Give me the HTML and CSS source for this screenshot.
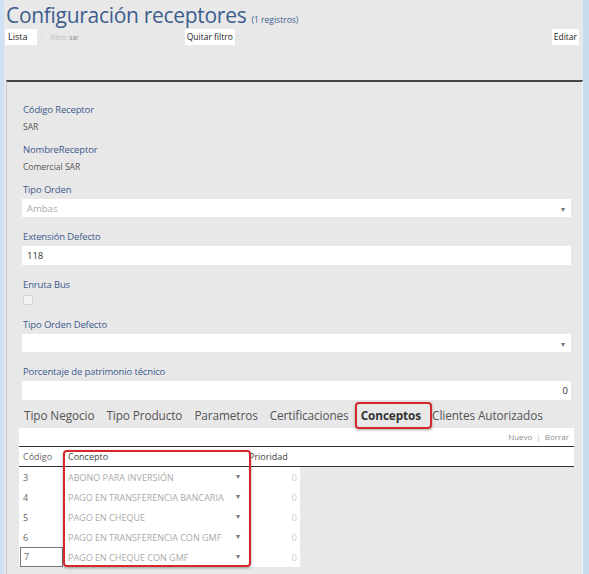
FILE: index.html
```html
<!DOCTYPE html>
<html lang="es">
<head>
<meta charset="utf-8">
<title>Configuración receptores</title>
<link rel="stylesheet" href="styles.css">
</head>
<body>
<div class="page">
  <div class="header">
    <h1 class="title">Configuración receptores <span class="count">(1 registros)</span></h1>
  </div>
  <div class="toolbar">
    <span class="btn btn-lista">Lista</span>
    <span class="sep">|</span>
    <span class="filter"><span class="filter-key">Filtro:</span> sar</span>
    <span class="btn btn-quitar">Quitar filtro</span>
    <span class="spacer"></span>
    <span class="btn btn-editar">Editar</span>
  </div>

  <div class="panel">
    <div class="field field-display">
      <div class="label">Código Receptor</div>
      <div class="value">SAR</div>
    </div>
    <div class="field field-display">
      <div class="label">NombreReceptor</div>
      <div class="value">Comercial SAR</div>
    </div>
    <div class="field field-input">
      <div class="label">Tipo Orden</div>
      <div class="input select"><span class="placeholder">Ambas</span><span class="caret">▾</span></div>
    </div>
    <div class="field field-input">
      <div class="label">Extensión Defecto</div>
      <div class="input text-input">118</div>
    </div>
    <div class="field field-input">
      <div class="label">Enruta Bus</div>
      <div class="checkbox"></div>
    </div>
    <div class="field field-input">
      <div class="label">Tipo Orden Defecto</div>
      <div class="input select"><span class="placeholder"></span><span class="caret">▾</span></div>
    </div>
    <div class="field field-last">
      <div class="label">Porcentaje de patrimonio técnico</div>
      <div class="input text-input num">0</div>
    </div>

    <div class="tabs-section">
      <div class="tabs">
        <span class="tab">Tipo Negocio</span>
        <span class="tab">Tipo Producto</span>
        <span class="tab">Parametros</span>
        <span class="tab">Certificaciones</span>
        <span class="tab tab-active">Conceptos</span>
        <span class="tab tab-after">Clientes Autorizados</span>
      </div>
      <div class="grid-wrap">
        <div class="grid-actions"><span>Nuevo</span><span class="bar">|</span><span>Borrar</span></div>
        <div class="grid-head">
          <span class="col-code">Código</span>
          <span class="col-concept">Concepto</span>
          <span class="col-prio">Prioridad</span>
        </div>
        <div class="grid-body">
          <div class="row"><span class="col-code">3</span><span class="col-concept"><span>ABONO PARA INVERSIÓN</span><span class="caret">▾</span></span><span class="col-prio">0</span></div>
          <div class="row"><span class="col-code">4</span><span class="col-concept"><span>PAGO EN TRANSFERENCIA BANCARIA</span><span class="caret">▾</span></span><span class="col-prio">0</span></div>
          <div class="row"><span class="col-code">5</span><span class="col-concept"><span>PAGO EN CHEQUE</span><span class="caret">▾</span></span><span class="col-prio">0</span></div>
          <div class="row"><span class="col-code">6</span><span class="col-concept"><span>PAGO EN TRANSFERENCIA CON GMF</span><span class="caret">▾</span></span><span class="col-prio">0</span></div>
          <div class="row"><span class="col-code col-selected">7</span><span class="col-concept"><span>PAGO EN CHEQUE CON GMF</span><span class="caret">▾</span></span><span class="col-prio">0</span></div>
          <div class="highlight-concept"></div>
        </div>
      </div>
    </div>
  </div>
</div>
</body>
</html>
```

FILE: styles.css
```css
* { box-sizing: border-box; }
html, body { margin: 0; padding: 0; }
body {
  font-family: "Open Sans", "Noto Sans", sans-serif;
  background: #e8e8e8;
  color: #333;
}
.page {
  width: 589px;
  height: 574px;
  overflow: hidden;
  background: #e8e8e8;
  border-left: 4px solid #cfe2f3;
  border-right: 6px solid #c5dbee;
}
.header { padding-left: 2px; height: 29px; }
.title {
  margin: 0;
  font-weight: normal;
  font-size: 21px;
  line-height: 30px;
  color: #3d5d8e;
  letter-spacing: -0.3px;
}
.count { font-size: 8.5px; letter-spacing: 0; }

.toolbar {
  display: flex;
  align-items: center;
  height: 16px;
  font-size: 9px;
}
.btn {
  background: #fff;
  color: #222;
  height: 16px;
  line-height: 16px;
  padding: 0 3px;
  white-space: nowrap;
}
.btn-lista { margin-left: 1px; width: 32px; }
.sep { color: #d0d0d0; margin-left: 3px; font-size: 8px; }
.filter { color: #8a8a8a; font-size: 6.5px; margin-left: 6px; }
.filter-key { color: #b8b8b8; }
.btn-quitar { margin-left: 106px; font-size: 8.5px; padding: 0 2px; }
.spacer { flex: 1; }
.btn-editar { margin-right: 4px; font-size: 8.5px; padding: 0 2px; }

.panel {
  margin: 35px 0 0 2px;
  border-top: 2px solid #474747;
  border-left: 1px solid #c8c8c8;
  border-right: 1px solid #f4f4f4;
  padding: 21px 11px 0 15px;
  height: 500px;
}
.label {
  font-size: 9.5px;
  letter-spacing: -0.15px;
  line-height: 14px;
  color: #3d5a8c;
  padding-left: 1px;
  white-space: nowrap;
}
.value {
  margin-top: 3px;
  font-size: 8.5px;
  line-height: 14px;
  color: #555;
  padding-left: 1px;
}
.field-display { margin-bottom: 9px; }
.field-input { margin-bottom: 13px; }
.input {
  margin-top: 2px;
  background: #fff;
  height: 19px;
  display: flex;
  align-items: center;
  padding: 0 6px 0 5px;
  font-size: 9.5px;
  color: #333;
}
.select { height: 18px; justify-content: space-between; }
.placeholder { color: #aaa; }
.caret { color: #777; font-size: 8px; }
.num { justify-content: flex-end; padding-right: 3px; }
.checkbox {
  margin: 3px 0 0 1px;
  width: 10px;
  height: 10px;
  background: #f3f3f3;
  border: 1px solid #d4d4d4;
}

.tabs-section { margin: 2px -3px 0 -3px; }
.tabs {
  display: flex;
  align-items: center;
  height: 26px;
  padding-left: 5px;
  font-size: 11.8px;
  letter-spacing: -0.1px;
  color: #555;
  white-space: nowrap;
}
.tab { margin-right: 12px; flex-shrink: 0; }
.tab-active {
  font-weight: bold;
  color: #333;
  margin-left: -6px;
  margin-right: 0;
  padding: 0 9px 0 4px;
  height: 27px;
  line-height: 23px;
  border: 2px solid #d4282c;
  border-radius: 4px;
  box-shadow: 0 1px 3px rgba(0,0,0,0.35);
}
.tab-after { margin-left: 0; }

.grid-actions {
  background: #fff;
  display: flex;
  justify-content: flex-end;
  gap: 4px;
  height: 18px;
  line-height: 18px;
  padding-right: 5px;
  font-size: 8px;
  color: #8c8c8c;
}
.bar { color: #bbb; }
.grid-head {
  background: #fff;
  display: flex;
  align-items: center;
  height: 21px;
  border-top: 1px solid #333;
  border-bottom: 1px solid #333;
  font-size: 9px;
  color: #444;
}
.grid-body { position: relative; width: 281px; }
.row {
  display: flex;
  align-items: center;
  height: 20px;
  background: #fff;
  font-size: 9px;
}
.col-code { width: 44px; padding-left: 4px; color: #666; white-space: nowrap; }
.col-concept {
  width: 186px;
  padding: 0 9px 0 5px;
  display: flex;
  justify-content: space-between;
  color: #aaa;
  white-space: nowrap;
}
.grid-head .col-concept { color: #444; }
.col-prio { width: 51px; text-align: right; padding-right: 3px; color: #ccc; }
.grid-head .col-prio { text-align: left; padding-left: 0; color: #444; }
.row .col-concept .caret { font-size: 7.5px; color: #777; }
.col-selected {
  border: 1px solid #777;
  height: 20px;
  line-height: 18px;
  margin-left: 1px;
  width: 43px;
  padding-left: 3px;
}
.highlight-concept {
  position: absolute;
  left: 44px;
  top: -17px;
  width: 188px;
  height: 117px;
  border: 2px solid #d4282c;
  border-radius: 4px;
  box-shadow: 0 1px 3px rgba(0,0,0,0.35);
  pointer-events: none;
}
```
